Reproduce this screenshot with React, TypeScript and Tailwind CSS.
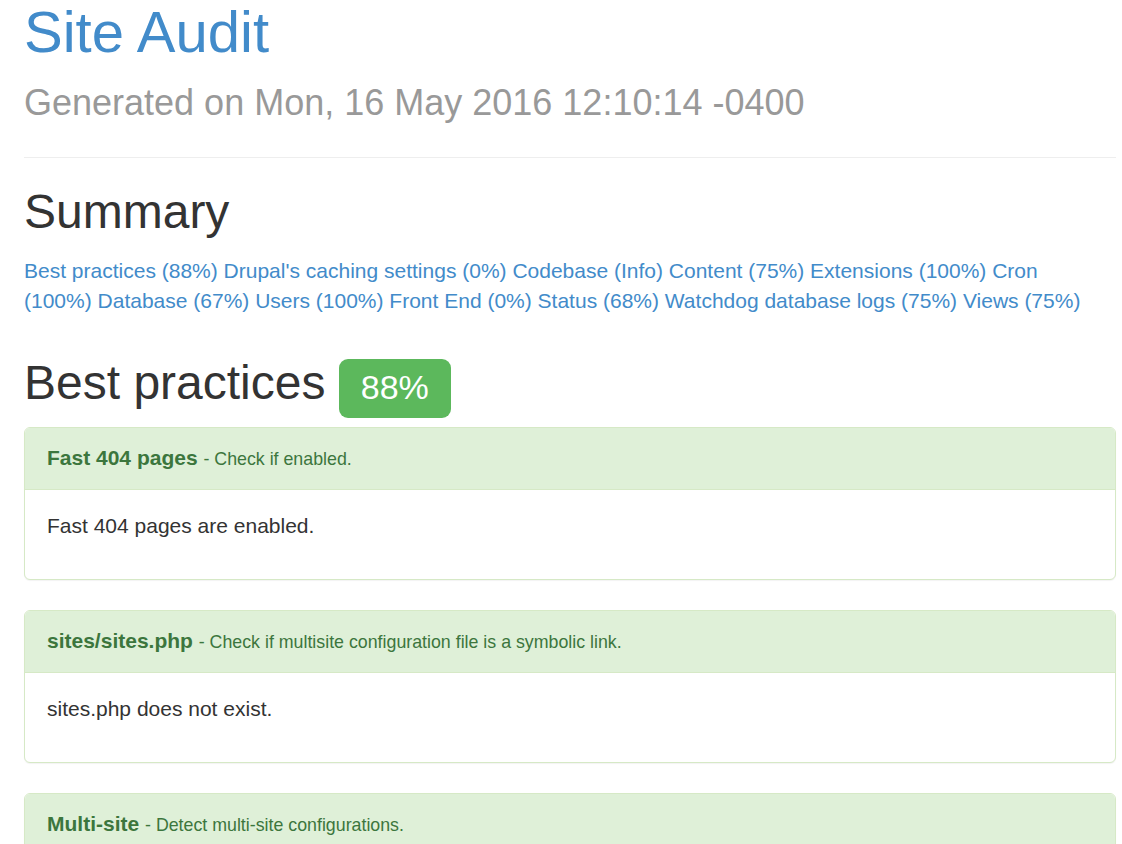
import React from "react";

const summary = [
  "Best practices (88%)",
  "Drupal's caching settings (0%)",
  "Codebase (Info)",
  "Content (75%)",
  "Extensions (100%)",
  "Cron (100%)",
  "Database (67%)",
  "Users (100%)",
  "Front End (0%)",
  "Status (68%)",
  "Watchdog database logs (75%)",
  "Views (75%)",
];

const checks = [
  { title: "Fast 404 pages", desc: "Check if enabled.", result: "Fast 404 pages are enabled." },
  { title: "sites/sites.php", desc: "Check if multisite configuration file is a symbolic link.", result: "sites.php does not exist." },
  { title: "Multi-site", desc: "Detect multi-site configurations.", result: "sites/sites.php does not exist." },
];

function Panel({ title, desc, result }: { title: string; desc: string; result: string }) {
  return (
    <div className="mb-[30px] rounded-[6px] border border-[#d6e9c6] bg-white shadow-[0_1px_1px_rgba(0,0,0,0.05)]">
      <div className="rounded-t-[5px] border-b border-[#d6e9c6] bg-[#dff0d8] px-[22px] py-[15px] text-[#3c763d]">
        <strong className="font-bold">{title}</strong>{" "}
        <small className="text-[17.8px]">- {desc}</small>
      </div>
      <div className="px-[22px] pt-[21px] pb-[23px]">
        <p className="mb-[15px]">{result}</p>
      </div>
    </div>
  );
}

export default function App() {
  return (
    <div className="min-h-screen bg-white">
      <div className="ml-[24px] w-[1092px] font-['Liberation_Sans',Arial,sans-serif] text-[21px] leading-[30px] text-[#333]">
        <div className="border-b border-[#eee] pb-[23px]">
          <h1 className="text-[58px] leading-[63px] font-normal text-[#428bca]">
            Site Audit
            <br />
            <small className="text-[36px] text-[#999]">Generated on Mon, 16 May 2016 12:10:14 -0400</small>
          </h1>
        </div>

        <h2 className="mt-[28px] text-[48px] leading-[52px] font-normal">Summary</h2>
        <p className="mt-[18px] mr-[24px]">
          {summary.map((s, i) => (
            <React.Fragment key={s}>
              <a href="#" className="text-[#428bca]">{s}</a>
              {i < summary.length - 1 ? " " : null}
            </React.Fragment>
          ))}
        </p>

        <h2 className="mt-[41px] mb-[9px] text-[48px] leading-[52px] font-normal">
          Best practices{" "}
          <span className="inline-block rounded-[9px] bg-[#5cb85c] px-[22px] pt-[11px] pb-[14px] text-[34px] leading-none text-white">
            88%
          </span>
        </h2>

        {checks.map((c) => (
          <Panel key={c.title} {...c} />
        ))}
      </div>
    </div>
  );
}
